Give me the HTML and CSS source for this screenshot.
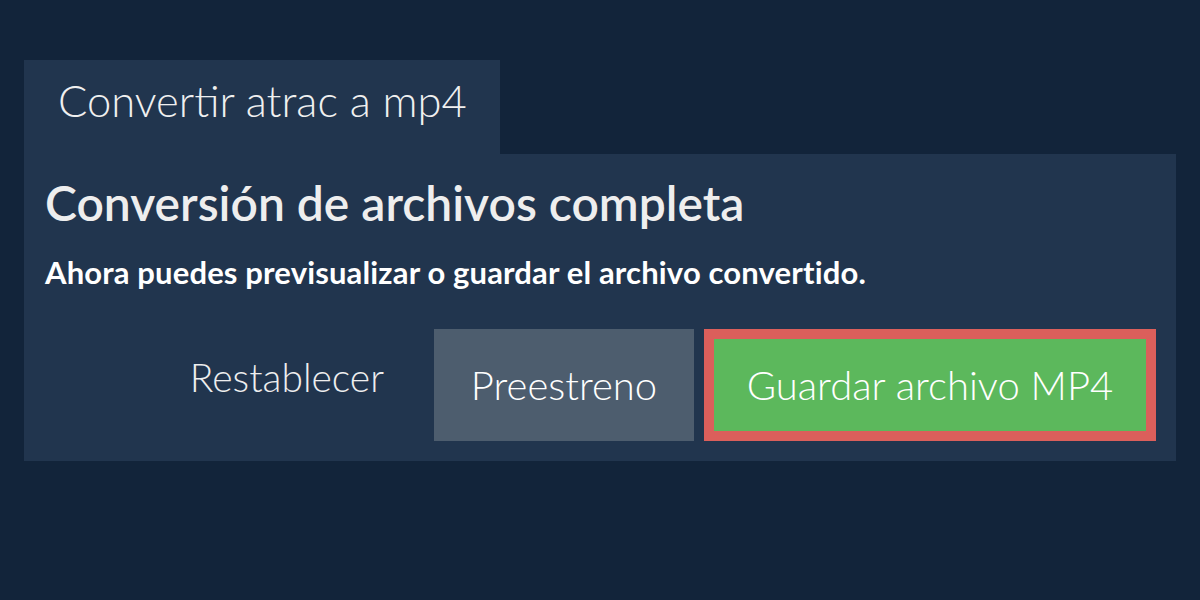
FILE: index.html
```html
<!DOCTYPE html>
<html lang="es">
<head>
<meta charset="utf-8">
<title>Convertir atrac a mp4</title>
<link rel="stylesheet" href="styles.css">
</head>
<body>
<div class="wrap">
  <div class="tab">Convertir atrac a mp4</div>
  <div class="panel">
    <h1 class="title">Conversión de archivos completa</h1>
    <p class="sub">Ahora puedes previsualizar o guardar el archivo convertido.</p>
    <div class="actions">
      <button class="btn reset">Restablecer</button>
      <button class="btn preview">Preestreno</button>
      <button class="btn save">Guardar archivo MP4</button>
    </div>
  </div>
</div>
</body>
</html>
```

FILE: styles.css
```css
html, body {
  margin: 0;
  padding: 0;
  background: #12243a;
  font-family: Lato, "Open Sans", sans-serif;
  color: #eeeeee;
}
.wrap {
  padding: 60px 24px 0 24px;
}
.tab {
  display: inline-block;
  box-sizing: border-box;
  width: 476px;
  height: 94px;
  padding: 14px 0 0 34px;
  background: #21354e;
  font-size: 43.5px;
  font-weight: 300;
  line-height: 53px;
  color: #f0f0f0;
}
.panel {
  background: #21354e;
  padding: 20px 20px 20px 21px;
  display: block;
}
.title {
  margin: 0;
  font-size: 48px;
  font-weight: 600;
  line-height: 58px;
  color: #eeeeee;
}
.sub {
  margin: 22px 0 0 0;
  font-size: 31px;
  font-weight: 700;
  line-height: 36px;
  letter-spacing: 0.15px;
  color: #ffffff;
}
.actions {
  margin-top: 39px;
  display: flex;
  justify-content: flex-end;
  align-items: center;
  gap: 10px;
}
.btn {
  font-family: Lato, "Open Sans", sans-serif;
  font-size: 40px;
  font-weight: 300;
  color: #ffffff;
  border: 0;
  margin: 0;
  padding: 0;
  box-sizing: border-box;
  height: 112px;
}
.reset {
  font-size: 39px;
  background: transparent;
  padding: 0 40px 17px 0;
  color: #eeeeee;
}
.preview {
  width: 260px;
  background: #4d5d6e;
}
.save {
  width: 452px;
  background: #5cb85c;
  border: 10px solid #db5f5b;
}
```
